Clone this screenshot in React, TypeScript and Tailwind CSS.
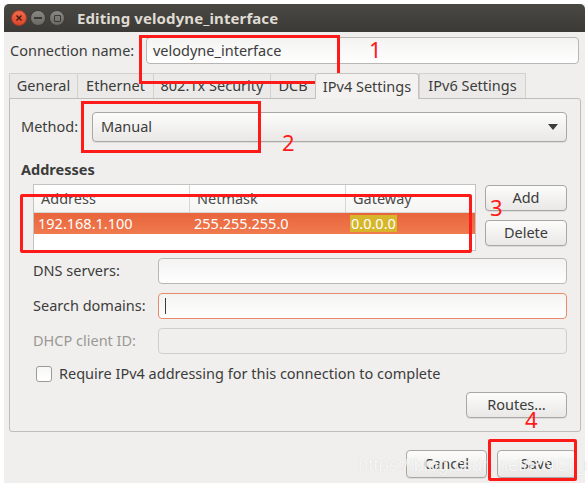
import React from "react";

const TABS = [
  { label: "General", w: "w-[68px]" },
  { label: "Ethernet", w: "w-[76px]" },
  { label: "802.1x Security", w: "w-[117px]" },
  { label: "DCB", w: "w-[45px]" },
  { label: "IPv4 Settings", w: "w-[104px]", active: true },
  { label: "IPv6 Settings", w: "w-[106px]" },
];

const btn =
  "rounded-[4px] border border-[#a8a7a3] bg-gradient-to-b from-[#fcfcfb] to-[#e9e8e6] text-[#3c3c3c] text-[14.5px] flex items-center justify-center shadow-[0_1px_0_rgba(0,0,0,0.08)]";

const entry =
  "rounded-[4px] border border-[#b8b7b3] bg-gradient-to-b from-[#f3f3f2] to-white h-[26px]";

function TitleButtons() {
  return (
    <div className="flex items-center gap-[3px] pl-[7px]">
      <div className="w-[16px] h-[16px] rounded-full bg-gradient-to-b from-[#f06a4c] to-[#d9472b] border border-[#a63a25] flex items-center justify-center">
        <svg width="8" height="8" viewBox="0 0 8 8">
          <path d="M1.5 1.5 L6.5 6.5 M6.5 1.5 L1.5 6.5" stroke="#4a1a10" strokeWidth="1.4" />
        </svg>
      </div>
      <div className="w-[16px] h-[16px] rounded-full bg-gradient-to-b from-[#8a8883] to-[#6b6964] border border-[#3e3d39] flex items-center justify-center">
        <div className="w-[8px] h-[2px] bg-[#3a3935]" />
      </div>
      <div className="w-[16px] h-[16px] rounded-full bg-gradient-to-b from-[#8a8883] to-[#6b6964] border border-[#3e3d39] flex items-center justify-center">
        <div className="w-[7px] h-[7px] border-[1.5px] border-[#3a3935] rounded-[1px]" />
      </div>
    </div>
  );
}

export default function App() {
  return (
    <div
      className="relative w-[587px] h-[488px] bg-white pt-[4px] pl-[4px] overflow-hidden text-[#3c3c3c]"
      style={{ fontFamily: '"Noto Sans", "Open Sans", sans-serif' }}
    >
      {/* window */}
      <div className="w-[581px] h-[479px] flex flex-col bg-[#f0efed]">
        {/* title bar */}
        <div className="h-[28px] rounded-t-[5px] bg-gradient-to-b from-[#4a4843] to-[#3b3a36] flex items-center">
          <TitleButtons />
          <span className="ml-[12px] text-[15px] font-bold text-[#dfdbd2] tracking-[0.1px]">
            Editing velodyne_interface
          </span>
        </div>

        <div className="flex-1 flex flex-col pl-[5px] pr-[4px]">
          {/* connection name */}
          <div className="flex items-center mt-[5px] h-[27px]">
            <span className="pl-[1px] text-[14.5px] w-[137px]">Connection name:</span>
            <div className="flex-1 h-[27px] mr-[2px] rounded-[4px] border border-[#b8b7b3] bg-gradient-to-b from-[#f3f3f2] to-white flex items-center pl-[6px] text-[14.5px]">
              velodyne_interface
            </div>
          </div>

          {/* tabs */}
          <div className="mt-[9px] flex h-[25px]">
            {TABS.map((t) => (
              <div
                key={t.label}
                className={
                  t.active
                    ? `${t.w} h-[26px] flex items-center justify-center text-[14.5px] border border-b-0 border-[#c4c3bf] rounded-t-[3px] bg-[#f3f2f0] z-10`
                    : `${t.w} flex items-center justify-center text-[14.5px] border-t border-l border-[#d2d1cd] bg-[#ebeae8]`
                }
              >
                {t.label}
              </div>
            ))}
            <div className="border-l border-[#d2d1cd]" />
          </div>

          {/* panel */}
          <div className="w-[572px] h-[334px] border border-[#bebdb9] rounded-b-[3px] rounded-tr-[3px] bg-[#f0efed] pl-[11px] pr-[13px] pt-[13px] flex flex-col">
            <div className="flex items-center h-[30px]">
              <span className="text-[14.5px] w-[71px]">Method:</span>
              <div className={`${btn} flex-1 h-[30px] !justify-between px-[8px]`}>
                <span>Manual</span>
                <svg width="10" height="6" viewBox="0 0 10 6">
                  <path d="M0 0 L10 0 L5 6 Z" fill="#3c3c3c" />
                </svg>
              </div>
            </div>

            <div className="mt-[20px] text-[14.5px] font-bold leading-[15px]">Addresses</div>

            <div className="mt-[7px] ml-[12px] flex gap-[9px]">
              <div className="w-[444px] h-[67px] border border-[#c4c3bf] bg-white flex flex-col">
                <div className="h-[28px] flex text-[14.5px] text-[#4a4a4a] border-b border-[#d8d7d3] bg-gradient-to-b from-white to-[#f4f4f3]">
                  <div className="w-[156px] pl-[7px] border-r border-[#d8d7d3] flex items-center">Address</div>
                  <div className="w-[156px] pl-[7px] border-r border-[#d8d7d3] flex items-center">Netmask</div>
                  <div className="flex-1 pl-[7px] flex items-center">Gateway</div>
                </div>
                <div className="h-[21px] flex text-[14.5px] text-white bg-gradient-to-b from-[#e8643c] to-[#f07a4e]">
                  <div className="w-[156px] pl-[4px] flex items-center">192.168.1.100</div>
                  <div className="w-[156px] pl-[4px] flex items-center">255.255.255.0</div>
                  <div className="flex-1 pl-[4px] flex items-center">
                    <span className="bg-[#d7b62b] h-[17px] leading-[17px] px-[1px]">0.0.0.0</span>
                  </div>
                </div>
              </div>
              <div className="flex flex-col gap-[9px] pt-[1px]">
                <div className={`${btn} w-[82px] h-[26px]`}>Add</div>
                <div className={`${btn} w-[82px] h-[26px]`}>Delete</div>
              </div>
            </div>

            {/* form */}
            <div className="mt-[7px] ml-[12px] grid grid-cols-[125px_1fr] gap-y-[9px] items-center">
              <span className="text-[14.5px]">DNS servers:</span>
              <div className={entry} />
              <span className="text-[14.5px]">Search domains:</span>
              <div className={`${entry} !border-[#e98a6a] flex items-center pl-[6px]`}>
                <div className="w-[1px] h-[16px] bg-[#3c3c3c]" />
              </div>
              <span className="text-[14.5px] text-[#9a9994]">DHCP client ID:</span>
              <div className="h-[26px] rounded-[4px] border border-[#cfceca] bg-[#f0efed]" />
            </div>

            <div className="mt-[9px] ml-[15px] flex items-center gap-[7px]">
              <div className="w-[16px] h-[16px] rounded-[3px] border border-[#9c9b97] bg-gradient-to-b from-[#f7f7f6] to-white" />
              <span className="text-[14.5px]">Require IPv4 addressing for this connection to complete</span>
            </div>

            <div className="mt-[7px] flex justify-end">
              <div className={`${btn} w-[101px] h-[26px]`}>Routes…</div>
            </div>
          </div>

          {/* bottom buttons */}
          <div className="mt-[18px] flex justify-end gap-[10px] pr-[5px]">
            <div className={`${btn} w-[81px] h-[28px]`}>Cancel</div>
            <div className={`${btn} w-[79px] h-[28px]`}>Save</div>
          </div>
        </div>
      </div>

      {/* watermark */}
      <div
        className="absolute left-[358px] top-[452px] text-[18px] text-white/85 [text-shadow:0_0_1px_rgba(0,0,0,0.18)] tracking-[0.2px]"
        style={{ fontFamily: '"Liberation Sans", sans-serif' }}
      >
        https://blog.csdn.net/RNCI_uzi
      </div>

      {/* red annotations */}
      <div className="absolute left-[139px] top-[35px] w-[201px] h-[49px] border-[3px] border-[#ff1a1a]" />
      <div className="absolute left-[369px] top-[38px] text-[22px] leading-[22px] text-[#ff1a1a]">1</div>
      <div className="absolute left-[81px] top-[101px] w-[180px] h-[52px] border-[3px] border-[#ff1a1a]" />
      <div className="absolute left-[282px] top-[131px] text-[22px] leading-[22px] text-[#ff1a1a]">2</div>
      <div className="absolute left-[20px] top-[194px] w-[452px] h-[59px] border-[3px] border-[#ff1a1a] rounded-[2px]" />
      <div className="absolute left-[490px] top-[196px] text-[22px] leading-[22px] text-[#ff1a1a]">3</div>
      <div className="absolute left-[488px] top-[439px] w-[89px] h-[42px] border-[3px] border-[#ff1a1a] rounded-[2px]" />
      <div className="absolute left-[525px] top-[408px] text-[22px] leading-[22px] text-[#ff1a1a]">4</div>
    </div>
  );
}
